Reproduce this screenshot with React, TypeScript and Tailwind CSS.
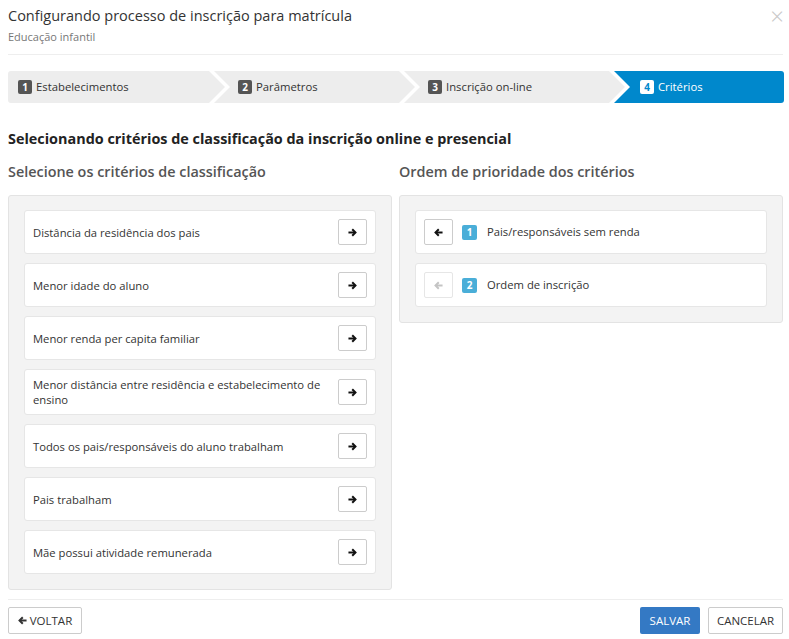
const steps = [
  { n: 1, label: "Estabelecimentos", w: "w-[217px]", first: true },
  { n: 2, label: "Parâmetros", w: "w-[201px]" },
  { n: 3, label: "Inscrição on-line", w: "w-[221px]" },
  { n: 4, label: "Critérios", w: "w-[170px]", active: true },
];

const criterios = [
  "Distância da residência dos pais",
  "Menor idade do aluno",
  "Menor renda per capita familiar",
  "Menor distância entre residência e estabelecimento de ensino",
  "Todos os pais/responsáveis do aluno trabalham",
  "Pais trabalham",
  "Mãe possui atividade remunerada",
];

const prioridade = [
  { n: 1, label: "Pais/responsáveis sem renda", enabled: true },
  { n: 2, label: "Ordem de inscrição", enabled: false },
];

// seta grossa no estilo font-awesome 4
function Arrow({ left, className }: { left?: boolean; className?: string }) {
  return (
    <svg viewBox="0 0 10 10" className={className} fill="none" stroke="currentColor" strokeWidth="2.2" strokeLinecap="butt" strokeLinejoin="miter">
      {left ? (
        <>
          <path d="M9.5 5H2" />
          <path d="M5.3 1.4L1.7 5l3.6 3.6" />
        </>
      ) : (
        <>
          <path d="M0.5 5H8" />
          <path d="M4.7 1.4L8.3 5 4.7 8.6" />
        </>
      )}
    </svg>
  );
}

function Step({ n, label, w, first, active }: { n: number; label: string; w: string; first?: boolean; active?: boolean }) {
  const clip = first
    ? "[clip-path:polygon(0_0,calc(100%_-_16px)_0,100%_50%,calc(100%_-_16px)_100%,0_100%)] rounded-l-[3px]"
    : active
      ? "[clip-path:polygon(0_0,100%_0,100%_100%,0_100%,16px_50%)] rounded-r-[3px]"
      : "[clip-path:polygon(0_0,calc(100%_-_16px)_0,100%_50%,calc(100%_-_16px)_100%,0_100%,16px_50%)]";
  return (
    <div
      className={`${w} ${clip} ${first ? "pl-[10px]" : active ? "-ml-[11px] pl-[26px]" : "-ml-[11px] pl-[24px]"} ${active ? "bg-[#0088cc] text-white" : "bg-[#ededed] text-[#333]"} h-[32px] flex items-center gap-[4px] text-[11.3px] shrink-0`}
    >
      <span
        className={`w-[14px] h-[14px] rounded-[2px] flex items-center justify-center text-[10px] font-bold leading-none ${active ? "bg-white text-[#0088cc]" : "bg-[#555] text-white"}`}
      >
        {n}
      </span>
      <span>{label}</span>
    </div>
  );
}

export default function App() {
  return (
    <div className="w-[789px] h-[639px] bg-white pl-[8px] pr-[6px] font-['Open_Sans',sans-serif] text-[#333] overflow-hidden">
      <div className="flex items-start justify-between pt-[6px]">
        <div>
          <h1 className="text-[14.5px] leading-[20px] text-[#333]">Configurando processo de inscrição para matrícula</h1>
          <p className="text-[11px] leading-[16px] mt-[3px] text-[#777]">Educação infantil</p>
        </div>
        <span className="text-[24px] leading-[20px] font-light text-[#c8c8c8] mr-[-1px]">×</span>
      </div>
      <div className="border-t border-[#eee] mt-[9px]" />

      <div className="flex mt-[16px]">
        {steps.map((s) => (
          <Step key={s.n} {...s} />
        ))}
      </div>

      <h2 className="text-[14.4px] leading-[20px] font-bold text-[#222] mt-[26px]">
        Selecionando critérios de classificação da inscrição online e presencial
      </h2>

      <div className="grid grid-cols-2 gap-[7px] mt-[13px]">
        <div>
          <h3 className="text-[14.4px] leading-[20px] font-semibold text-[#555]">Selecione os critérios de classificação</h3>
          <div className="mt-[13px] bg-[#f3f3f3] border border-[#e3e3e3] rounded-[3px] px-[15px] pt-[14px] pb-[15px] flex flex-col gap-[9px]">
            {criterios.map((c) => (
              <div
                key={c}
                className="bg-white border border-[#e6e6e6] rounded-[3px] min-h-[44px] pl-[8px] pr-[8px] py-[7px] flex items-center justify-between gap-3"
              >
                <span className="text-[11.25px] leading-[15px] text-[#333]">{c}</span>
                <button className="w-[29px] h-[26px] shrink-0 border border-[#ccc] rounded-[2px] bg-white flex items-center justify-center text-[#111]">
                  <Arrow className="w-[9px] h-[9px]" />
                </button>
              </div>
            ))}
          </div>
        </div>

        <div>
          <h3 className="text-[14.4px] leading-[20px] font-semibold text-[#555]">Ordem de prioridade dos critérios</h3>
          <div className="mt-[13px] bg-[#f3f3f3] border border-[#e3e3e3] rounded-[3px] px-[15px] pt-[14px] pb-[15px] flex flex-col gap-[9px]">
            {prioridade.map((p) => (
              <div
                key={p.n}
                className="bg-white border border-[#e6e6e6] rounded-[3px] h-[44px] pl-[8px] flex items-center"
              >
                <button
                  className={`w-[29px] h-[26px] shrink-0 border rounded-[2px] bg-white flex items-center justify-center ${p.enabled ? "border-[#ccc] text-[#111]" : "border-[#e6e6e6] text-[#c4c4c4]"}`}
                >
                  <Arrow left className="w-[9px] h-[9px]" />
                </button>
                <span className="ml-[9px] w-[15px] h-[15px] rounded-[2px] bg-[#4aaed8] text-white text-[10px] font-bold flex items-center justify-center leading-none">
                  {p.n}
                </span>
                <span className="ml-[10px] text-[11.25px] text-[#333]">{p.label}</span>
              </div>
            ))}
          </div>
        </div>
      </div>

      <div className="border-t border-[#eee] mt-[9px]" />
      <div className="flex items-center justify-between mt-[7px]">
        <button className="h-[27px] w-[74px] border border-[#ccc] rounded-[2px] bg-white text-[11.5px] text-[#333] flex items-center justify-center gap-[3px]">
          <Arrow left className="w-[9px] h-[9px]" />
          VOLTAR
        </button>
        <div className="flex gap-[8px]">
          <button className="h-[27px] w-[60px] rounded-[2px] bg-[#3479c4] text-white text-[11.5px]">SALVAR</button>
          <button className="h-[27px] w-[75px] border border-[#ccc] rounded-[2px] bg-white text-[11.5px] text-[#333]">CANCELAR</button>
        </div>
      </div>
    </div>
  );
}
